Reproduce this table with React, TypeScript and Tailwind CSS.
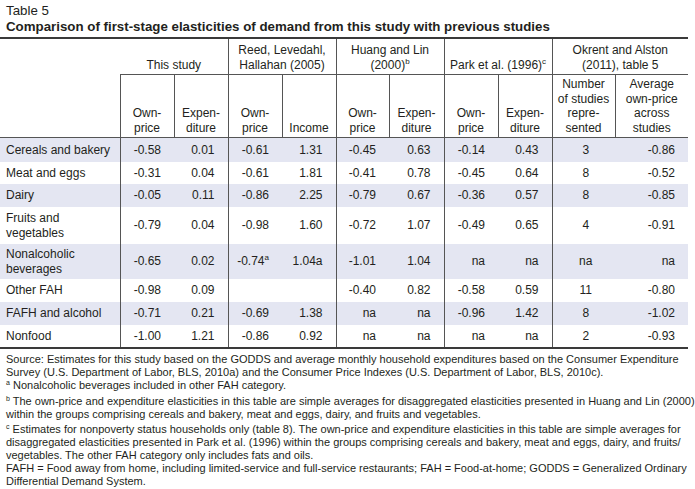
const sup = 'relative -top-[5px] text-[8px] leading-none';

const rows: { label: string[]; vals: React.ReactNode[]; h: string; shade: boolean }[] = [
  { label: ['Cereals and bakery'], vals: ['-0.58', '0.01', '-0.61', '1.31', '-0.45', '0.63', '-0.14', '0.43', '3', '-0.86'], h: 'h-[24px]', shade: true },
  { label: ['Meat and eggs'], vals: ['-0.31', '0.04', '-0.61', '1.81', '-0.41', '0.78', '-0.45', '0.64', '8', '-0.52'], h: 'h-[22px]', shade: false },
  { label: ['Dairy'], vals: ['-0.05', '0.11', '-0.86', '2.25', '-0.79', '0.67', '-0.36', '0.57', '8', '-0.85'], h: 'h-[23px]', shade: true },
  { label: ['Fruits and', 'vegetables'], vals: ['-0.79', '0.04', '-0.98', '1.60', '-0.72', '1.07', '-0.49', '0.65', '4', '-0.91'], h: 'h-[37px]', shade: false },
  {
    label: ['Nonalcoholic', 'beverages'],
    vals: [
      '-0.65',
      '0.02',
      <span key="a">
        -0.74<span className={sup}>a</span>
      </span>,
      '1.04a',
      '-1.01',
      '1.04',
      'na',
      'na',
      'na',
      'na',
    ],
    h: 'h-[35px]',
    shade: true,
  },
  { label: ['Other FAH'], vals: ['-0.98', '0.09', '', '', '-0.40', '0.82', '-0.58', '0.59', '11', '-0.80'], h: 'h-[23px]', shade: false },
  { label: ['FAFH and alcohol'], vals: ['-0.71', '0.21', '-0.69', '1.38', 'na', 'na', '-0.96', '1.42', '8', '-1.02'], h: 'h-[23px]', shade: true },
  { label: ['Nonfood'], vals: ['-1.00', '1.21', '-0.86', '0.92', 'na', 'na', 'na', 'na', '2', '-0.93'], h: 'h-[22px]', shade: false },
];

const widths = [120, 54, 54, 54, 54, 53, 55, 54, 54, 63, 73];

const subHeads = [
  ['Own-', 'price'],
  ['Expen-', 'diture'],
  ['Own-', 'price'],
  ['Income'],
  ['Own-', 'price'],
  ['Expen-', 'diture'],
  ['Own-', 'price'],
  ['Expen-', 'diture'],
  ['Number', 'of studies', 'repre-', 'sented'],
  ['Average', 'own-price', 'across', 'studies'],
];

export default function App() {
  return (
    <div
      className="w-[695px] h-[489px] bg-white text-[#231f20] overflow-hidden"
      style={{ fontFamily: '"Liberation Sans", Arial, sans-serif' }}
    >
      <div className="pl-[6px] pt-[3px]">
        <div className="text-[13.3px] leading-[16px]">Table 5</div>
        <div className="text-[13.3px] leading-[16px] font-bold">
          Comparison of first-stage elasticities of demand from this study with previous studies
        </div>
      </div>

      <table className="mt-[2px] w-[688px] table-fixed border-collapse text-[12px] leading-[14.5px] [&_td]:p-0 [&_th]:p-0">
        <colgroup>
          {widths.map((w, i) => (
            <col key={i} style={{ width: w }} />
          ))}
        </colgroup>
        <thead>
          <tr className="border-t-2 border-[#3a3a3a]">
            <th className="font-normal">
              <div className="h-[35px]" />
            </th>
            {[
              ['This study'],
              ['Reed, Levedahl,', 'Hallahan (2005)'],
              [
                'Huang and Lin',
                <>
                  (2000)<span className={sup}>b</span>
                </>,
              ],
              [
                <>
                  Park et al. (1996)<span className={sup}>c</span>
                </>,
              ],
              ['Okrent and Alston', '(2011), table 5'],
            ].map((lines, i) => (
              <th
                key={i}
                colSpan={2}
                className={`font-normal border-b border-[#555] ${i < 4 ? 'border-r' : ''}`}
              >
                <div className="h-[35px] flex flex-col justify-end items-center pb-[2px]">
                  {lines.map((l, j) => (
                    <div key={j}>{l}</div>
                  ))}
                </div>
              </th>
            ))}
          </tr>
          <tr className="border-b border-[#555]">
            <th className="font-normal border-r border-[#555]">
              <div className="h-[62px]" />
            </th>
            {subHeads.map((lines, i) => (
              <th key={i} className={`font-normal border-[#555] ${i < 9 ? 'border-r' : ''}`}>
                <div className="h-[62px] flex flex-col justify-end items-center pb-[2px]">
                  {lines.map((l, j) => (
                    <div key={j}>{l}</div>
                  ))}
                </div>
              </th>
            ))}
          </tr>
        </thead>
        <tbody>
          {rows.map((r, ri) => (
            <tr
              key={ri}
              className={`${r.shade ? 'bg-[#e4e6f2]' : ''} ${ri === rows.length - 1 ? 'border-b-2 border-[#3a3a3a]' : ''}`}
            >
              <td className="border-r border-[#555]">
                <div className={`${r.h} flex flex-col justify-center pl-[6px]`}>
                  {r.label.map((l, j) => (
                    <div key={j}>{l}</div>
                  ))}
                </div>
              </td>
              {r.vals.map((v, i) => (
                <td key={i} className={`${i % 2 === 1 && i < 8 ? 'border-r border-[#555]' : ''}`}>
                  <div
                    className={`${r.h} flex items-center ${
                      i === 8 ? 'justify-center pl-[4px]' : 'justify-end pr-[13px]'
                    }`}
                  >
                    {v}
                  </div>
                </td>
              ))}
            </tr>
          ))}
        </tbody>
      </table>

      <div className="pl-[6px] pt-[4px] text-[11px] leading-[13px]">
        <p>
          Source: Estimates for this study based on the GODDS and average monthly household expenditures based on the Consumer Expenditure
          Survey (U.S. Department of Labor, BLS, 2010a) and the Consumer Price Indexes (U.S. Department of Labor, BLS, 2010c).
        </p>
        <p>
          <span className="relative -top-[4px] text-[7px] leading-none">a</span> Nonalcoholic beverages included in other FAH category.
        </p>
        <p className="mt-[3px]">
          <span className="relative -top-[4px] text-[7px] leading-none">b</span> The own-price and expenditure elasticities in this table are simple averages for disaggregated elasticities presented in Huang and Lin (2000)
          within the groups comprising cereals and bakery, meat and eggs, dairy, and fruits and vegetables.
        </p>
        <p className="mt-[2px]">
          <span className="relative -top-[4px] text-[7px] leading-none">c</span> Estimates for nonpoverty status households only (table 8). The own-price and expenditure elasticities in this table are simple averages for
          disaggregated elasticities presented in Park et al. (1996) within the groups comprising cereals and bakery, meat and eggs, dairy, and fruits/
          vegetables. The other FAH category only includes fats and oils.
        </p>
        <p>
          FAFH = Food away from home, including limited-service and full-service restaurants; FAH = Food-at-home; GODDS = Generalized Ordinary
          Differential Demand System.
        </p>
      </div>
    </div>
  );
}
